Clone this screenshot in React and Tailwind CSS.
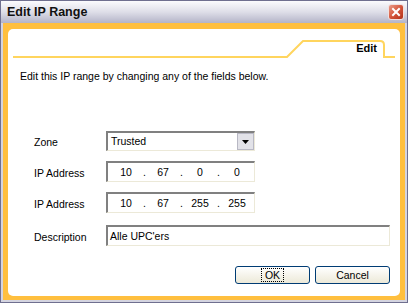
import React from "react";

function Field({ className = "", children }) {
  return (
    <div
      className={
        "flex items-center bg-white border-t-2 border-l-2 border-r border-b border-t-[#808080] border-l-[#808080] border-r-[#ece9d8] border-b-[#ece9d8] " +
        className
      }
    >
      {children}
    </div>
  );
}

function IpField({ octets }) {
  return (
    <Field className="w-[149px] h-[21px] pl-[5px]">
      {octets.map((o, i) => (
        <React.Fragment key={i}>
          {i > 0 && <span className="w-[11px] text-center">.</span>}
          <span className="w-[26px] text-center">{o}</span>
        </React.Fragment>
      ))}
    </Field>
  );
}

export default function App() {
  return (
    <div className="w-[408px] h-[303px] flex flex-col border border-[#6f6f8f] bg-[#d4d4e0] font-['Liberation_Sans',Arial,sans-serif] text-[10.5px] leading-[13px] text-black overflow-hidden">
      {/* Title bar */}
      <div className="h-[22px] flex items-center justify-between pl-[6px] pr-[3px] bg-gradient-to-b from-[#fbfbfd] via-[#dedee8] to-[#b4b4c8]">
        <span className="text-[12.5px] font-bold leading-[15px] text-[#111]">Edit IP Range</span>
        <div className="w-[16px] h-[16px] rounded-[3px] border border-[#f0e0e0] bg-gradient-to-br from-[#e89a88] via-[#d5553b] to-[#b23018] flex items-center justify-center">
          <svg width="10" height="10" viewBox="0 0 10 10">
            <path d="M2 2 L8 8 M8 2 L2 8" stroke="#fff" strokeWidth="2" strokeLinecap="square" />
          </svg>
        </div>
      </div>

      {/* Frame */}
      <div className="flex-1 flex flex-col px-[2px] pb-[2px]">
        <div className="flex-1 flex flex-col bg-[#ffbf3e] pt-[6px] px-[5px] pb-[4px]">
          <div className="flex-1 flex flex-col bg-white rounded-[5px]">
            {/* Tab header */}
            <div className="relative h-[30px]">
              <svg width="392" height="30" viewBox="0 0 392 30" className="block">
                <path
                  d="M5 28 H279 L295 12 H372 Q376 12 376 16 V28 H387"
                  fill="none"
                  stroke="#ffd55e"
                  strokeWidth="2"
                />
              </svg>
              <span className="absolute right-[23px] top-[13px] text-[11px] font-bold">Edit</span>
            </div>

            <p className="mt-[11px] pl-[12px]">
              Edit this IP range by changing any of the fields below.
            </p>

            {/* Zone */}
            <div className="mt-[48px] flex items-center pl-[26px]">
              <span className="w-[72px] pt-[3px]">Zone</span>
              <Field className="w-[149px] h-[20px] pl-[3px] justify-between">
                <span>Trusted</span>
                <div className="w-[17px] h-[17px] bg-[#e2e2e8] border border-[#b8b8c4] flex items-center justify-center">
                  <svg width="7" height="4" viewBox="0 0 7 4">
                    <path d="M0 0 H7 L3.5 4 Z" fill="#000" />
                  </svg>
                </div>
              </Field>
            </div>

            <div className="mt-[10px] flex items-center pl-[26px]">
              <span className="w-[72px] pt-[3px]">IP Address</span>
              <IpField octets={["10", "67", "0", "0"]} />
            </div>

            <div className="mt-[10px] flex items-center pl-[26px]">
              <span className="w-[72px] pt-[3px]">IP Address</span>
              <IpField octets={["10", "67", "255", "255"]} />
            </div>

            <div className="mt-[12px] flex items-center pl-[26px]">
              <span className="w-[72px] pt-[3px]">Description</span>
              <Field className="w-[284px] h-[21px] pl-[2px]">
                <span>Alle UPC'ers</span>
              </Field>
            </div>

            {/* Buttons */}
            <div className="mt-[20px] flex justify-end gap-[5px] pr-[10px]">
              <button className="w-[75px] h-[18px] rounded-[3px] border border-[#003c74] bg-gradient-to-b from-[#ffffff] to-[#ece9d8] flex items-center justify-center">
                <span className="border border-dotted border-black px-[3px] h-[14px] leading-[12px]">OK</span>
              </button>
              <button className="w-[75px] h-[18px] rounded-[3px] border border-[#003c74] bg-gradient-to-b from-[#ffffff] to-[#ece9d8] flex items-center justify-center">
                Cancel
              </button>
            </div>
          </div>
        </div>
      </div>
    </div>
  );
}
